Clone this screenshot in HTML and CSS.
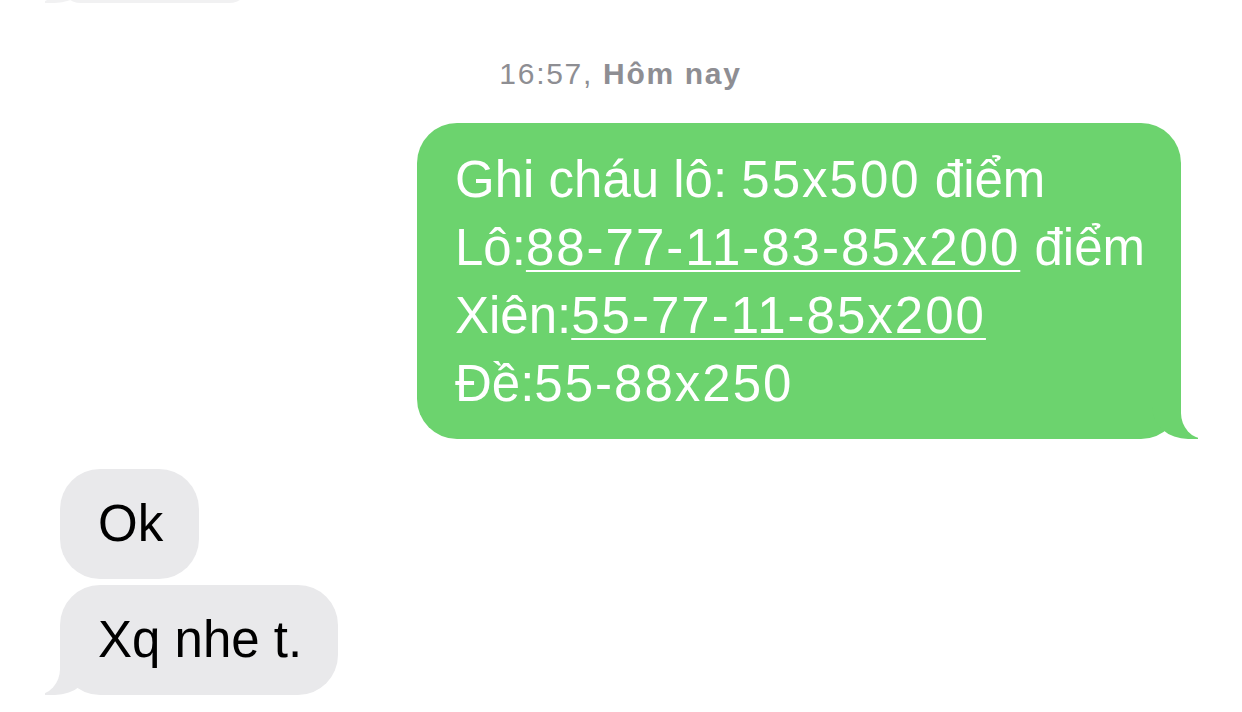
FILE: index.html
```html
<!DOCTYPE html>
<html lang="vi">
<head>
    <meta charset="UTF-8">
    <meta name="viewport" content="width=device-width, initial-scale=1.0">
    <title>Tin nhắn</title>
    <link rel="stylesheet" href="styles.css">
</head>
<body>
    <main class="thread">
        <div class="row row-in row-prev">
            <div class="bubble bubble-in bubble-prev tail"></div>
        </div>

        <p class="stamp">16:57, <b>Hôm nay</b></p>

        <div class="row row-out">
            <div class="bubble bubble-out tail">
                Ghi cháu lô: <span class="num">55x500</span> điểm<br>
                Lô:<a class="num" href="#">88-77-11-83-85x200</a> điểm<br>
                Xiên:<a class="num" href="#">55-77-11-85x200</a><br>
                Đề:<span class="num">55-88x250</span>
            </div>
        </div>

        <div class="row row-in row-first">
            <div class="bubble bubble-in">Ok</div>
        </div>
        <div class="row row-in row-next">
            <div class="bubble bubble-in tail">Xq nhe t.</div>
        </div>
    </main>
</body>
</html>
```

FILE: styles.css
```css
*,
*::after,
*::before{
    box-sizing: border-box;
    margin: 0;
    padding: 0;
}
body{
    background-color: #ffffff;
    font-family: "Liberation Sans", Arial, sans-serif;
    overflow: hidden;
}
.thread{
    display: flex;
    flex-direction: column;
    padding: 0 61px 0 60px;
}
.row{
    display: flex;
}
.row-out{
    justify-content: flex-end;
}
.row-in{
    justify-content: flex-start;
}
/* burbuja anterior, solo asoma el borde inferior */
.row-prev{
    margin-top: -39px;
    height: 40px;
}
.bubble-prev{
    width: 190px;
    height: 40px;
    opacity: 0.6;
}
.stamp{
    margin-top: 55px;
    text-align: center;
    font-size: 30px;
    line-height: 36px;
    letter-spacing: 1.7px;
    color: #8e8e93;
}
.stamp b{
    font-weight: bold;
}
.bubble{
    position: relative;
    font-size: 51px;
    line-height: 68px;
    border-radius: 40px;
    padding: 21px 36px 21px 38px;
}
.bubble-out{
    margin-top: 31px;
    padding: 23px 36px 21px 38px;
    background-color: #6cd36e;
    color: #ffffff;
}
/* los numeros son mas anchos en la fuente original */
.num{
    letter-spacing: 2px;
}
.bubble-out a{
    color: #ffffff;
    text-decoration: underline;
    text-decoration-thickness: 2px;
    text-underline-offset: 5px;
}
.bubble-in{
    background-color: #e9e9eb;
    color: #000000;
}
.row-first{
    margin-top: 30px;
}
.row-next{
    margin-top: 6px;
}
/* colita de la burbuja */
.tail::before,
.tail::after{
    content: "";
    position: absolute;
    bottom: 0;
    height: 56px;
}
.bubble-out.tail::before{
    right: -17px;
    width: 46px;
    background-color: #6cd36e;
    border-bottom-left-radius: 36px 32px;
}
.bubble-out.tail::after{
    right: -60px;
    width: 60px;
    background-color: #ffffff;
    border-bottom-left-radius: 24px 26px;
}
.bubble-in.tail::before{
    left: -15px;
    width: 46px;
    background-color: #e9e9eb;
    border-bottom-right-radius: 36px 32px;
}
.bubble-in.tail::after{
    left: -60px;
    width: 60px;
    background-color: #ffffff;
    border-bottom-right-radius: 24px 26px;
}
```
